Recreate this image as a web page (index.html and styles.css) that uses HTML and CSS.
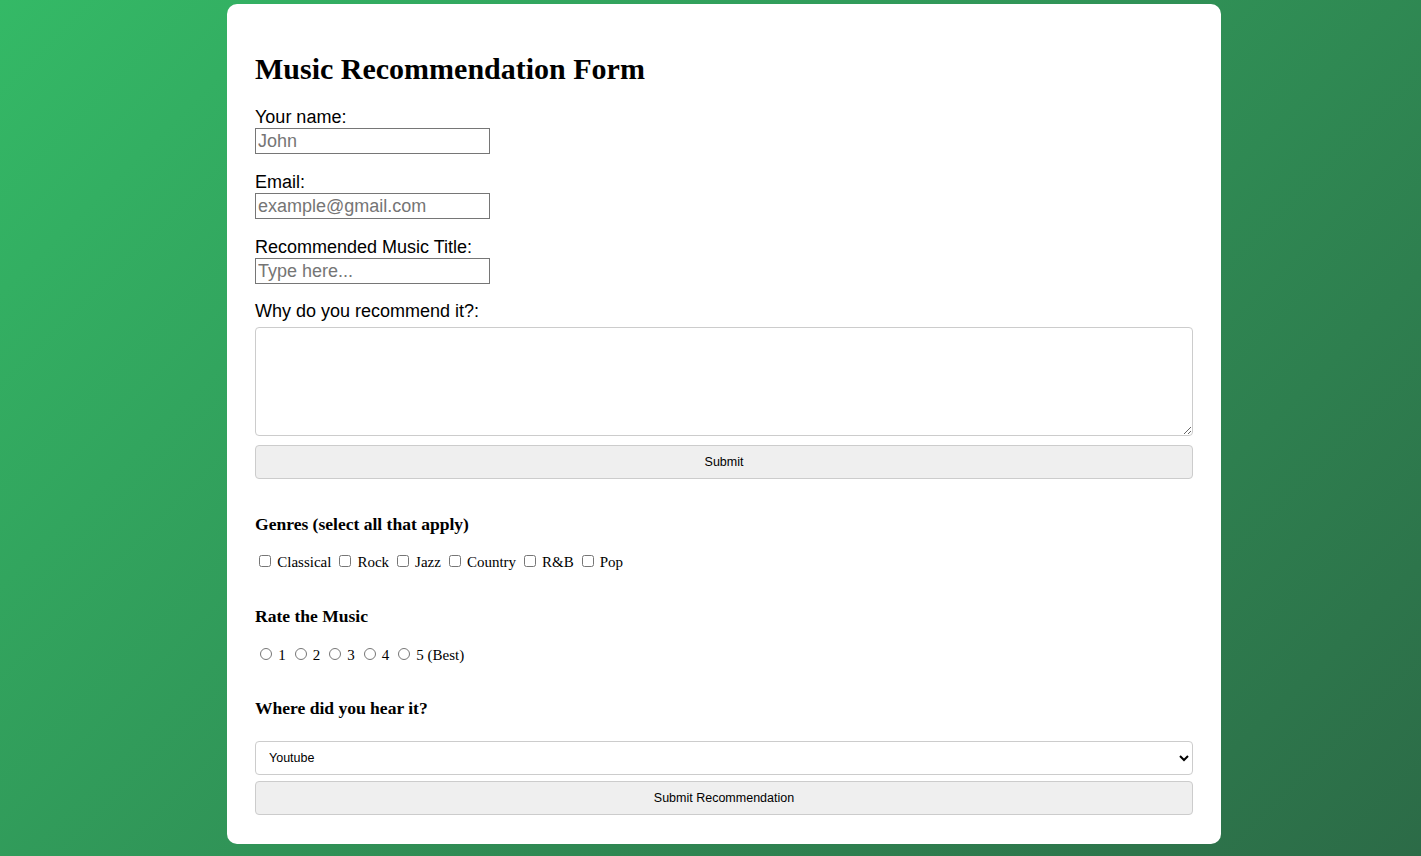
FILE: index.html
```html
<!DOCTYPE html>
<html lang="en">
<head>
<meta charset="utf-8">
<title>Music Recommendation Form</title>
<link rel="stylesheet" href="styles.css">
</head>
<body>
<div class="card">
  <h1 class="title">Music Recommendation Form</h1>
  <form class="form">
    <div class="field">
      <label class="field-label" for="name">Your name:</label>
      <input class="text-input" id="name" type="text" placeholder="John">
    </div>
    <div class="field">
      <label class="field-label" for="email">Email:</label>
      <input class="text-input" id="email" type="email" placeholder="example@gmail.com">
    </div>
    <div class="field field-last">
      <label class="field-label" for="title">Recommended Music Title:</label>
      <input class="text-input" id="title" type="text" placeholder="Type here...">
    </div>
    <div class="field field-wide">
      <label class="field-label" for="why">Why do you recommend it?:</label>
      <textarea class="text-area" id="why"></textarea>
      <button type="button" class="btn">Submit</button>
    </div>

    <div class="section section-genres">
      <h3 class="section-title">Genres (select all that apply)</h3>
      <div class="choice-row">
        <label class="choice"><input type="checkbox" class="check"> Classical</label>
        <label class="choice"><input type="checkbox" class="check"> Rock</label>
        <label class="choice"><input type="checkbox" class="check"> Jazz</label>
        <label class="choice"><input type="checkbox" class="check"> Country</label>
        <label class="choice"><input type="checkbox" class="check"> R&amp;B</label>
        <label class="choice"><input type="checkbox" class="check"> Pop</label>
      </div>
    </div>

    <div class="section section-rate">
      <h3 class="section-title">Rate the Music</h3>
      <div class="choice-row">
        <label class="choice"><input type="radio" name="rate" class="radio"> 1</label>
        <label class="choice"><input type="radio" name="rate" class="radio"> 2</label>
        <label class="choice"><input type="radio" name="rate" class="radio"> 3</label>
        <label class="choice"><input type="radio" name="rate" class="radio"> 4</label>
        <label class="choice"><input type="radio" name="rate" class="radio"> 5 (Best)</label>
      </div>
    </div>

    <div class="section section-source">
      <h3 class="section-title">Where did you hear it?</h3>
      <select class="select">
        <option>Youtube</option>
        <option>Spotify</option>
        <option>Radio</option>
        <option>Friend</option>
      </select>
      <button type="button" class="btn btn-final">Submit Recommendation</button>
    </div>
  </form>
</div>
</body>
</html>
```

FILE: styles.css
```css
html, body {
  height: 100%;
}
body {
  margin: 0;
  padding-top: 4px;
  box-sizing: border-box;
  background: linear-gradient(135deg, #34b966 0%, #2c6b47 100%);
  font-family: "Liberation Serif", "Times New Roman", serif;
  font-size: 15px;
  color: #000;
}
.card {
  width: 994px;
  box-sizing: border-box;
  margin-left: 227px;
  background: #fff;
  border-radius: 10px;
  padding: 24px 28px 29px 28px;
}
.title {
  font-size: 30px;
  font-weight: bold;
  margin: 24px 0 21px 0;
}
.form {
  display: flex;
  flex-direction: column;
}
.field {
  display: flex;
  flex-direction: column;
  align-items: flex-start;
  margin-bottom: 18px;
}
.field-last {
  margin-bottom: 17px;
}
.field-wide {
  align-items: stretch;
  margin-bottom: 0;
}
.field-label {
  font-family: "Liberation Sans", Arial, sans-serif;
  font-size: 18px;
  line-height: 21px;
  margin-bottom: 0;
}
.field-wide .field-label {
  margin-bottom: 5px;
}
.text-input {
  width: 235px;
  height: 26px;
  box-sizing: border-box;
  border: 1px solid #767676;
  border-radius: 0;
  padding: 1px 2px;
  margin: 0;
  font-family: "Liberation Sans", Arial, sans-serif;
  font-size: 18px;
  color: #000;
}
.text-input::placeholder {
  color: #757575;
}
.text-area {
  height: 109px;
  box-sizing: border-box;
  border: 1px solid #ccc;
  border-radius: 4px;
  padding: 4px;
  margin: 0;
  font-family: "Liberation Sans", Arial, sans-serif;
  font-size: 15px;
  resize: vertical;
}
.btn {
  height: 34px;
  margin-top: 9px;
  box-sizing: border-box;
  border: 1px solid #ccc;
  border-radius: 4px;
  background: #efefef;
  font-family: "Liberation Sans", Arial, sans-serif;
  font-size: 12.5px;
  color: #000;
}
.btn-final {
  margin-top: 6px;
}
.section {
  display: flex;
  flex-direction: column;
  margin-top: 17px;
}
.section-title {
  font-size: 17.55px;
  font-weight: bold;
  margin: 17.5px 0;
  line-height: 20px;
}
.section-genres .section-title {
  margin-bottom: 18.5px;
}
.section-rate .section-title {
  margin-bottom: 19.5px;
}
.section-source {
  margin-top: 16px;
}
.choice-row {
  line-height: 17px;
}
.choice {
  font-size: 15px;
}
.check {
  width: 12px;
  height: 12px;
  margin: 3px 2.5px 3px 4px;
}
.radio {
  width: 12px;
  height: 12px;
  margin: 3px 2.5px 0 5px;
}
.select {
  height: 34px;
  margin-top: 6px;
  box-sizing: border-box;
  border: 1px solid #ccc;
  border-radius: 4px;
  background: #fff;
  padding: 0 9px;
  font-family: "Liberation Sans", Arial, sans-serif;
  font-size: 12.5px;
  color: #000;
}
```
